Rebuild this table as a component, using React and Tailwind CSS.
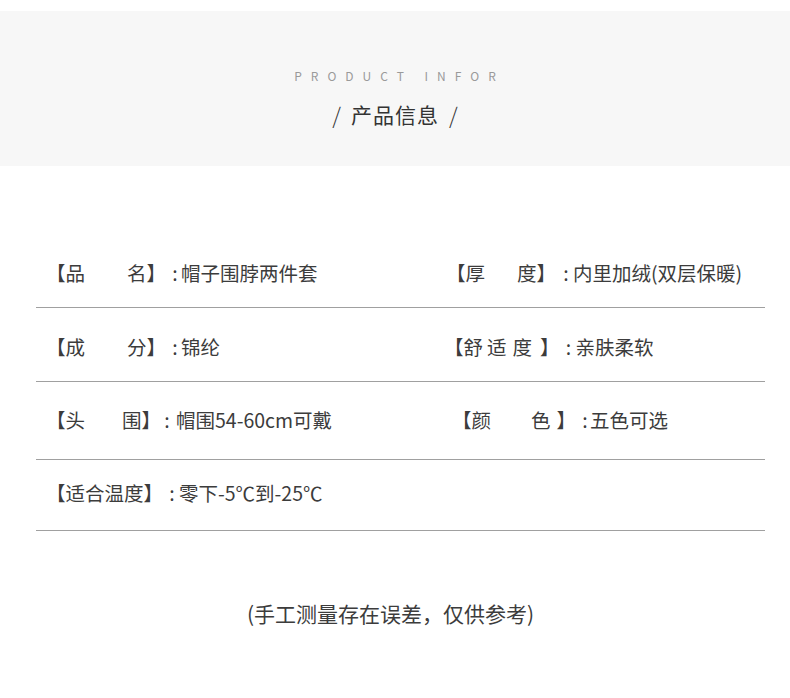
export default function App() {
  const font = { fontFamily: '"Noto Sans CJK SC", "Noto Sans", sans-serif' };
  return (
    <div className="w-[790px] h-[698px] bg-white text-[#3c3c3c]" style={font}>
      <div className="h-[11px]" />
      <div className="h-[155px] bg-[#f7f7f7] flex flex-col items-center">
        <div className="mt-[55px] text-[12px] leading-[20px] tracking-[0.75em] text-[#9a9a9a] pl-[0.75em]">PRODUCT INFOR</div>
        <div className="mt-[13px] text-[21px] leading-[30px] text-[#333] flex items-center">
          <span className="text-[22px] font-light">/</span>
          <span className="ml-[10px] tracking-[1px]">产品信息</span>
          <span className="ml-[10px] text-[22px] font-light">/</span>
        </div>
      </div>

      <div className="ml-[36px] w-[729px] mt-[93px] text-[19.5px] leading-[28px]">
        {/* row 1 */}
        <div className="flex pt-0 pb-[20px] border-b border-[#a0a0a0]">
          <div className="w-[410px] flex pl-[10px]">
            <span>【品</span>
            <span className="ml-[42px]">名】</span>
            <span className="ml-[4px] w-[10px] text-center">:</span>
            <span className="ml-[1px]">帽子围脖两件套</span>
          </div>
          <div className="flex">
            <span>【厚</span>
            <span className="ml-[32px]">度】</span>
            <span className="ml-[5px] w-[10px] text-center">:</span>
            <span className="ml-[2px]">内里加绒(双层保暖)</span>
          </div>
        </div>
        {/* row 2 */}
        <div className="flex pt-[25px] pb-[20px] border-b border-[#a0a0a0]">
          <div className="w-[410px] flex pl-[10px]">
            <span>【成</span>
            <span className="ml-[42px]">分】</span>
            <span className="ml-[4px] w-[10px] text-center">:</span>
            <span className="ml-[1px]">锦纶</span>
          </div>
          <div className="flex -ml-[2px]">
            <span>【舒</span>
            <span className="ml-[4px]">适</span>
            <span className="ml-[6px]">度</span>
            <span className="ml-[8px]">】</span>
            <span className="ml-[4px] w-[10px] text-center">:</span>
            <span className="ml-[2px]">亲肤柔软</span>
          </div>
        </div>
        {/* row 3 */}
        <div className="flex pt-[24px] pb-[25px] border-b border-[#a0a0a0]">
          <div className="w-[416px] flex pl-[10px]">
            <span>【头</span>
            <span className="ml-[37px]">围】</span>
            <span className="ml-[1px] w-[10px] text-center">:</span>
            <span className="ml-[4px]">帽围54-60cm可戴</span>
          </div>
          <div className="flex">
            <span>【颜</span>
            <span className="ml-[40px]">色</span>
            <span className="ml-[6px]">】</span>
            <span className="ml-[4px] w-[10px] text-center">:</span>
            <span className="ml-[0px]">五色可选</span>
          </div>
        </div>
        {/* row 4 */}
        <div className="flex pt-[19px] pb-[23px] border-b border-[#a0a0a0]">
          <div className="flex pl-[10px]">
            <span>【适合温度】</span>
            <span className="ml-[4px] w-[10px] text-center">:</span>
            <span className="ml-[2px]">零下-5℃到-25℃</span>
          </div>
        </div>
      </div>

      <div className="mt-[68px] pr-[9px] text-center text-[21px] leading-[28px]">(手工测量存在误差，仅供参考)</div>
    </div>
  );
}
